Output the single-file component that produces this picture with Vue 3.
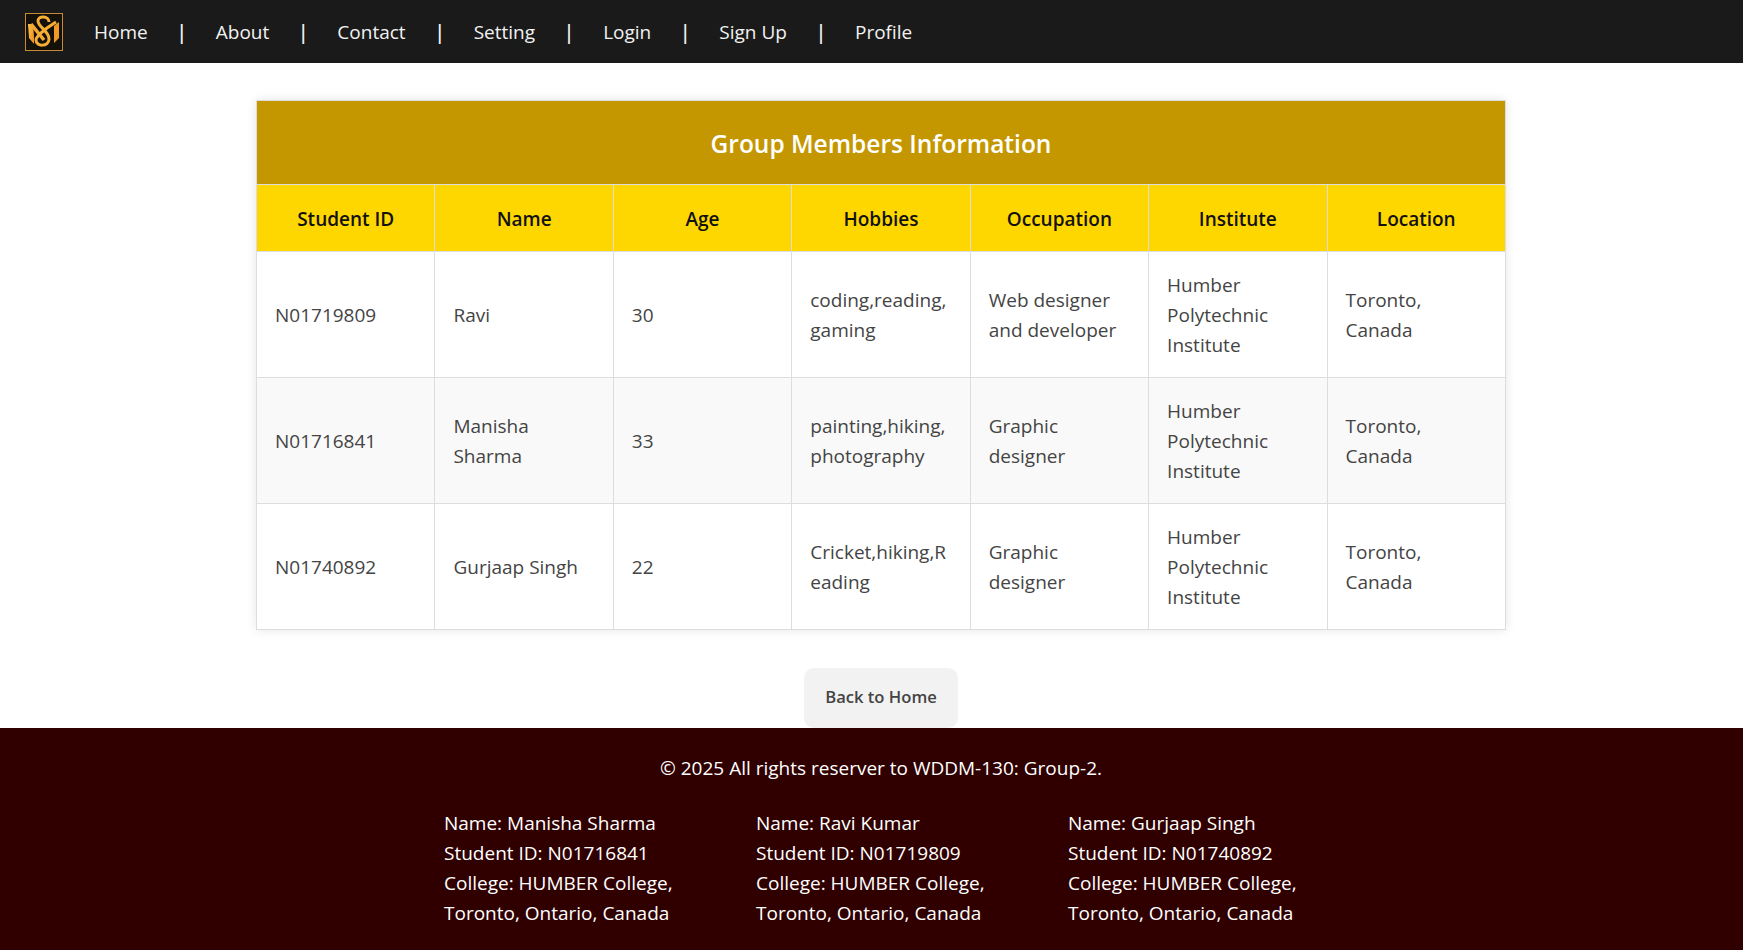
<script setup>
const navLinks = ['Home', 'About', 'Contact', 'Setting', 'Login', 'Sign Up', 'Profile']
const columns = ['Student ID', 'Name', 'Age', 'Hobbies', 'Occupation', 'Institute', 'Location']
const rows = [
  ['N01719809', 'Ravi', '30', 'coding,reading, gaming', 'Web designer and developer', 'Humber Polytechnic Institute', 'Toronto, Canada'],
  ['N01716841', 'Manisha Sharma', '33', 'painting,hiking, photography', 'Graphic designer', 'Humber Polytechnic Institute', 'Toronto, Canada'],
  ['N01740892', 'Gurjaap Singh', '22', 'Cricket,hiking,Reading', 'Graphic designer', 'Humber Polytechnic Institute', 'Toronto, Canada']
]
const members = [
  {name: 'Manisha Sharma', id: 'N01716841'},
  {name: 'Ravi Kumar', id: 'N01719809'},
  {name: 'Gurjaap Singh', id: 'N01740892'}
]
</script>

<template>
  <div class="page">
    <nav class="navbar">
      <svg class="logo" viewBox="0 0 38 38" aria-label="logo">
        <defs>
          <linearGradient id="gold" x1="0" y1="0" x2="1" y2="1">
            <stop offset="0" stop-color="#ffc548"/>
            <stop offset="1" stop-color="#ea8a1e"/>
          </linearGradient>
        </defs>
        <rect x="0.5" y="0.5" width="37" height="37" fill="#14100a" stroke="#c98a35"/>
        <path d="M3 11 L8 11 L9 24 L9 31 L4 25 Z" fill="url(#gold)"/>
        <path d="M6 11 L19 27" stroke="#f5a932" stroke-width="3.500" fill="none"/>
        <path d="M34 9 L34 25 L29 30 L29 13 Z" fill="#f09a28"/>
        <path d="M24 9 C24 3 13 2 13 8 C13 14 24 18 24 26 C24 34 11 34 11 27 C11 23 17 19 22 15 L31 9" stroke="#f7ae35" stroke-width="3" fill="none"/>
      </svg>
      <ul class="nav-list">
        <li v-for="(link, i) in navLinks" :key="link">
          <a href="#">{{ link }}</a>
          <span v-if="i < navLinks.length - 1" class="sep">|</span>
        </li>
      </ul>
    </nav>

    <main class="content">
      <table class="info-table">
        <thead>
          <tr>
            <th colspan="7" class="table-title">Group Members Information</th>
          </tr>
          <tr>
            <th v-for="col in columns" :key="col" class="col-head">{{ col }}</th>
          </tr>
        </thead>
        <tbody>
          <tr v-for="row in rows" :key="row[0]">
            <td v-for="(cell, i) in row" :key="i">{{ cell }}</td>
          </tr>
        </tbody>
      </table>
      <a href="#" class="back-btn">Back to Home</a>
    </main>

    <footer class="footer">
      <p class="copyright">© 2025 All rights reserver to WDDM-130: Group-2.</p>
      <div class="footer-cols">
        <div v-for="m in members" :key="m.id" class="member">
          <div>Name: {{ m.name }}</div>
          <div>Student ID: {{ m.id }}</div>
          <div>College: HUMBER College,</div>
          <div>Toronto, Ontario, Canada</div>
        </div>
      </div>
    </footer>
  </div>
</template>

<style>
body {
  margin: 0;
  background: #fff;
}
</style>

<style scoped>
.page {
  font-family: "Open Sans", "Noto Sans", sans-serif;
  font-size: 19px;
  min-height: 950px;
  display: flex;
  flex-direction: column;
}

/* nav */
.navbar {
  height: 63px;
  background: #1a1a1a;
  display: flex;
  align-items: center;
  padding-left: 25px;
  box-sizing: border-box;
}

.logo {
  width: 38px;
  height: 38px;
  flex: none;
}

.nav-list {
  display: flex;
  list-style: none;
  margin: 0 0 0 31px;
  padding: 0;
}

.nav-list li {
  display: flex;
}

.nav-list a {
  color: #f2f2f2;
  text-decoration: none;
}

.sep {
  color: #f2f2f2;
  font-weight: 600;
  margin: 0 28.800px;
}

/* table */
.content {
  flex: 1;
  display: flex;
  flex-direction: column;
  align-items: center;
  padding: 37px 0 0 19px;
}

.info-table {
  width: 1250px;
  table-layout: fixed;
  border-collapse: collapse;
  box-shadow: 0 0 10px rgba(0, 0, 0, 0.1);
}

.table-title {
  height: 84px;
  box-sizing: border-box;
  padding: 2px 0 0;
  background: #c49700;
  color: #fff;
  font-size: 24.500px;
  font-weight: 600;
  border: 1px solid #ddd;
}

.col-head {
  height: 67px;
  box-sizing: border-box;
  padding: 2px 0 0;
  background: #ffd700;
  color: #111;
  font-weight: 600;
  border: 1px solid #ddd;
}

.info-table td {
  height: 126px;
  box-sizing: border-box;
  padding: 0 18px;
  border: 1px solid #ddd;
  color: #444;
  line-height: 30px;
  overflow-wrap: anywhere;
}

.info-table tbody tr:nth-child(2) {
  background: #f9f9f9;
}

.back-btn {
  margin-top: 38px;
  height: 60px;
  width: 154px;
  display: flex;
  align-items: center;
  justify-content: center;
  box-sizing: border-box;
  padding-bottom: 3px;
  background: #f2f2f2;
  border-radius: 10px;
  color: #444;
  font-size: 16.600px;
  font-weight: 600;
  text-decoration: none;
}

/* footer */
.footer {
  background: #300000;
  color: #fff;
  height: 222px;
  box-sizing: border-box;
  padding: 25px 0 0;
}

.copyright {
  margin: 0 0 25px;
  padding-left: 19px;
  text-align: center;
  line-height: 30px;
}

.footer-cols {
  display: grid;
  grid-template-columns: repeat(3, 312px);
  padding-left: 444px;
  line-height: 30px;
}
</style>
